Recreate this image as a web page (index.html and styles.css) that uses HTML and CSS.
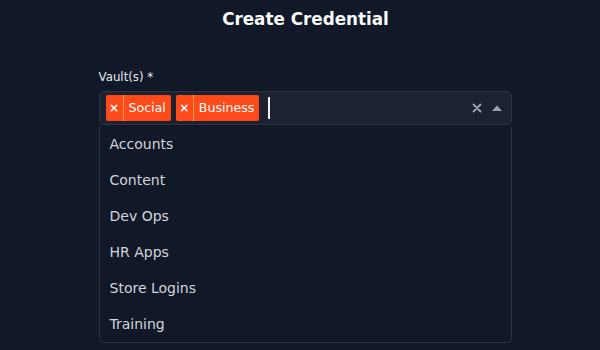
FILE: index.html
```html
<!DOCTYPE html>
<html>
<head>
<meta charset="utf-8">
<link rel="stylesheet" href="styles.css">
</head>
<body>
<div class="page">
  <h1 class="title">Create Credential</h1>
  <div class="field">
    <label class="label">Vault(s) *</label>
    <div class="control">
      <div class="values">
        <span class="tag"><span class="tag-x">×</span><span class="tag-label">Social</span></span>
        <span class="tag"><span class="tag-x">×</span><span class="tag-label">Business</span></span>
        <span class="caret"></span>
      </div>
      <div class="indicators">
        <svg class="clear" width="10" height="10" viewBox="0 0 10 10"><path d="M1.5 1.5 L8.5 8.5 M8.5 1.5 L1.5 8.5" stroke="#9ca3af" stroke-width="1.8" stroke-linecap="round"/></svg>
        <svg class="arrow" width="10" height="6" viewBox="0 0 10 6"><path d="M0 6 L5 0.5 L10 6 Z" fill="#9ca3af"/></svg>
      </div>
    </div>
    <ul class="menu">
      <li>Accounts</li>
      <li>Content</li>
      <li>Dev Ops</li>
      <li>HR Apps</li>
      <li>Store Logins</li>
      <li>Training</li>
    </ul>
  </div>
</div>
</body>
</html>
```
FILE: styles.css
```css
html, body {
  margin: 0;
  padding: 0;
  background: #111827;
  height: 100%;
  overflow: hidden;
}
.page {
  font-family: "DejaVu Sans", "Open Sans", sans-serif;
  color: #f3f4f6;
  display: flex;
  flex-direction: column;
  align-items: center;
}
.title {
  margin: 8px 0 0 0;
  font-size: 16.8px;
  font-weight: bold;
  line-height: 22px;
  color: #f9fafb;
  padding-left: 11px;
}
.field {
  width: 413px;
  margin-top: 39px;
  margin-left: 10px;
  display: flex;
  flex-direction: column;
}
.label {
  font-size: 11.8px;
  font-weight: 500;
  color: #e5e7eb;
  line-height: 16px;
  margin-bottom: 6px;
}
.control {
  height: 34px;
  box-sizing: border-box;
  border: 1px solid #2d3544;
  border-radius: 5px;
  background: #1c2231;
  display: flex;
  align-items: center;
  padding: 0 0 0 6px;
}
.values {
  flex: 1;
  display: flex;
  align-items: center;
  gap: 5px;
}
.tag {
  display: flex;
  height: 26px;
  background: #ff4a1a;
  border-radius: 2px;
  color: #fff;
  font-size: 12.6px;
  line-height: 26px;
}
.tag-x {
  width: 17px;
  text-align: center;
  border-right: 1px solid #ff9a4a;
  font-size: 12px;
  font-weight: bold;
}
.tag-label {
  padding: 0 5px 0 5px;
}
.caret {
  width: 2px;
  height: 22px;
  background: #f3f4f6;
  margin-left: 4px;
}
.indicators {
  display: flex;
  align-items: center;
  gap: 10px;
  padding-right: 9px;
}
.clear { display: block; }
.arrow { display: block; }
.menu {
  list-style: none;
  margin: 1px 0 0 0;
  padding: 0;
  border: 1px solid #2d3544;
  border-top: none;
  border-radius: 0 0 5px 5px;
  background: #111827;
}
.menu li {
  height: 36px;
  line-height: 36px;
  padding-left: 10px;
  font-size: 14px;
  color: #d1d5db;
}
```
